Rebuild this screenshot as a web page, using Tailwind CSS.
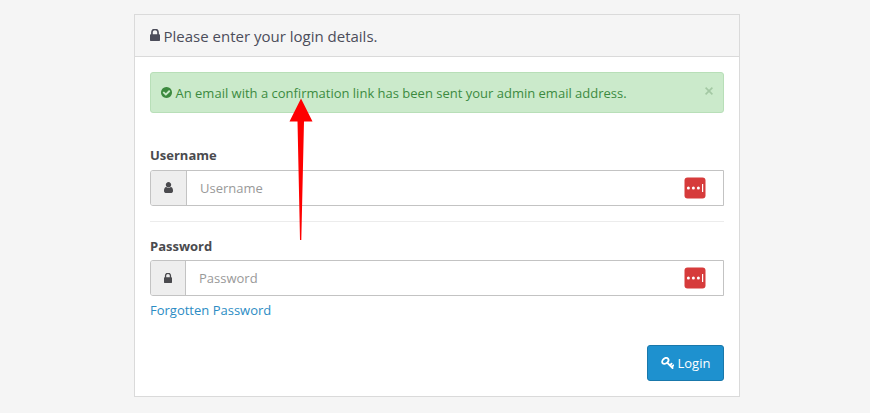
<!DOCTYPE html>
<html lang="en">
<head>
  <meta charset="UTF-8" />
  <meta name="viewport" content="width=device-width, initial-scale=1.0"/>
  <script src="https://cdn.jsdelivr.net/npm/@tailwindcss/browser@4"></script>
  <title>Administration</title>
</head>
<body class="relative h-[413px] overflow-hidden bg-[#f5f5f5] pt-[14px] pl-[134px] font-['Open_Sans',sans-serif] text-[13px] leading-5 text-[#4a4a4e]">
  <div class="h-[383px] w-[606px] border border-[#dadada] bg-white">
    <!-- Heading -->
    <div class="flex h-[42px] items-center border-b border-[#dadada] bg-[#f5f5f5] pl-[15px] text-[#4c4d5a]">
      <svg class="mb-px h-3 w-[10px]" viewBox="320 192 1152 1344" preserveAspectRatio="none" fill="currentColor" aria-hidden="true">
        <path d="M640 768h512v-192q0-106-75-181t-181-75-181 75-75 181v192zm832 96v576q0 40-28 68t-68 28h-960q-40 0-68-28t-28-68v-576q0-40 28-68t68-28h32v-192q0-184 132-316t316-132 316 132 132 316v192h32q40 0 68 28t28 68z" />
      </svg>
      <h1 class="ml-[3.5px] text-[15px]">Please enter your login details.</h1>
    </div>

    <div class="px-[15px] pt-[15px]">
      <!-- Alert -->
      <div class="flex h-[41px] items-center rounded-[3px] border border-[#b8dfb8] bg-[#cbeacb] pr-[10px] pl-[10px] text-[#3c8a3f]">
        <svg class="size-[11px]" viewBox="128 128 1536 1536" fill="currentColor" aria-hidden="true">
          <path d="M1412 734q0-28-18-46l-91-90q-19-19-45-19t-45 19l-408 407-226-226q-19-19-45-19t-45 19l-91 90q-18 18-18 46 0 27 18 45l362 362q19 19 45 19 27 0 46-19l543-543q18-18 18-45zm252 162q0 209-103 385.5t-279.5 279.5-385.5 103-385.5-103-279.5-279.5-103-385.5 103-385.5 279.5-279.5 385.5-103 385.5 103 279.5 279.5 103 385.5z" />
        </svg>
        <span class="ml-[3.5px]">An email with a confirmation link has been sent your admin email address.</span>
        <button type="button" class="mb-1 ml-auto" aria-label="Close">
          <svg class="size-2 stroke-[#a3c8a3]" viewBox="0 0 8 8" fill="none" stroke-width="1.6"><path d="M.6 .6l6.8 6.8M7.4 .6l-6.8 6.8" /></svg>
        </button>
      </div>

      <!-- Username -->
      <label class="mt-8 block font-bold">Username</label>
      <div class="mt-[5px] flex h-9 rounded-l-[3px] border border-[#c3c3c3]">
        <div class="flex w-9 items-center justify-center rounded-l-[2px] border-r border-[#c3c3c3] bg-[#eee]">
          <svg class="mb-px h-[11px] w-[9px]" viewBox="256 128 1280 1536" fill="currentColor" aria-hidden="true">
            <path d="M1536 1399q0 109-62.5 187t-150.5 78h-854q-88 0-150.5-78t-62.5-187q0-85 8.5-160.5t31.5-152 58.5-131 94-89 134.5-34.5q131 128 313 128t313-128q76 0 134.5 34.5t94 89 58.5 131 31.5 152 8.5 160.5zm-256-887q0 159-112.5 271.5t-271.5 112.5-271.5-112.5-112.5-271.5 112.5-271.5 271.5-112.5 271.5 112.5 112.5 271.5z" />
          </svg>
        </div>
        <div class="flex flex-1 items-center justify-between pr-[17px] pl-[13px] text-[#999]">
          <span>Username</span>
          <svg class="size-[22px]" viewBox="0 0 22 22" aria-hidden="true">
            <rect x="0.5" y="0.5" width="21" height="21" rx="3" fill="#d63b3b" />
            <g fill="#fff"><circle cx="4.4" cy="11" r="1.5" /><circle cx="9.4" cy="11" r="1.5" /><circle cx="14.4" cy="11" r="1.5" /><rect x="18" y="7" width="1.2" height="8" /></g>
          </svg>
        </div>
      </div>

      <hr class="mt-[15px] border-[#ececec]" />

      <!-- Password -->
      <label class="mt-[14px] block font-bold">Password</label>
      <div class="mt-1 flex h-9 rounded-l-[3px] border border-[#c3c3c3]">
        <div class="flex w-[35px] items-center justify-center rounded-l-[2px] border-r border-[#c3c3c3] bg-[#eee]">
          <svg class="h-[10px] w-2" viewBox="320 192 1152 1344" preserveAspectRatio="none" fill="currentColor" aria-hidden="true">
            <path d="M640 768h512v-192q0-106-75-181t-181-75-181 75-75 181v192zm832 96v576q0 40-28 68t-68 28h-960q-40 0-68-28t-28-68v-576q0-40 28-68t68-28h32v-192q0-184 132-316t316-132 316 132 132 316v192h32q40 0 68 28t28 68z" />
          </svg>
        </div>
        <div class="flex flex-1 items-center justify-between pr-[17px] pl-[13px] text-[#999]">
          <span>Password</span>
          <svg class="size-[22px]" viewBox="0 0 22 22" aria-hidden="true">
            <rect x="0.5" y="0.5" width="21" height="21" rx="3" fill="#d63b3b" />
            <g fill="#fff"><circle cx="4.4" cy="11" r="1.5" /><circle cx="9.4" cy="11" r="1.5" /><circle cx="14.4" cy="11" r="1.5" /><rect x="18" y="7" width="1.2" height="8" /></g>
          </svg>
        </div>
      </div>
      <a href="#" class="mt-1 block text-[#2b8cc4]">Forgotten Password</a>

      <div class="mt-[25px] flex justify-end">
        <button type="button" class="flex h-9 w-[77px] items-center rounded-[3px] border border-[#1978ab] bg-[#1e91cf] pl-[13px] text-white">
          <svg class="h-3 w-[13px]" viewBox="0 0 13 12" fill="none" stroke="currentColor" aria-hidden="true">
            <ellipse cx="4.3" cy="3.9" rx="3.5" ry="2.5" transform="rotate(-40 4.3 3.9)" stroke-width="1.8" />
            <path d="M6.4 5.8L11.6 11M8.9 8.3l1.7-1.7M10.7 10l1.7-1.7" stroke-width="1.8" stroke-linecap="round" />
          </svg>
          <span class="ml-[3.5px]">Login</span>
        </button>
      </div>
    </div>
  </div>

  <!-- Arrow over the form -->
  <svg class="absolute top-[98px] left-[289px] h-[143px] w-6" viewBox="0 0 24 143" aria-hidden="true">
    <path d="M12 0.5L23.5 23.5H15L12.3 142H11L8.5 23.5H0.5z" fill="#fe0000" />
  </svg>
</body>
</html>
